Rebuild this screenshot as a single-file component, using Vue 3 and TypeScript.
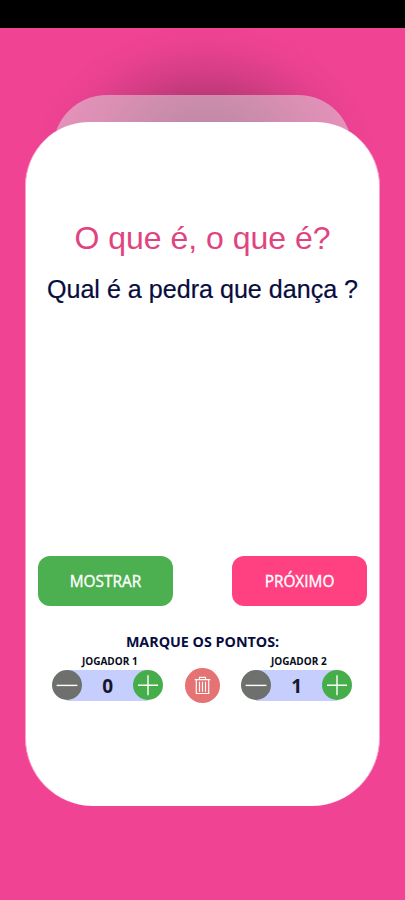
<script setup lang="ts">
import { ref } from 'vue'

interface Player {
  label: string
  points: number
}

const players = ref<Player[]>([
  { label: 'JOGADOR 1', points: 0 },
  { label: 'JOGADOR 2', points: 1 },
])

function change(player: Player, delta: number): void {
  player.points = Math.max(0, player.points + delta)
}

function reset(): void {
  players.value.forEach((p) => (p.points = 0))
}
</script>

<template>
  <div class="screen">
    <div class="status-bar"></div>
    <main class="stage">
      <div class="glow"></div>
      <div class="back-card"></div>
      <section class="card">
        <h1 class="title">O que é, o que é?</h1>
        <p class="question">Qual é a pedra que dança ?</p>
        <div class="actions">
          <button class="action show">MOSTRAR</button>
          <button class="action next">PRÓXIMO</button>
        </div>
        <h2 class="points-title">MARQUE OS PONTOS:</h2>
        <div class="scores">
          <div v-for="(player, i) in players" :key="player.label" class="player" :class="{ last: i === 1 }">
            <span class="label">{{ player.label }}</span>
            <div class="counter">
              <button class="round minus" @click="change(player, -1)">
                <svg viewBox="0 0 30 30"><path d="M4.6 15.4H25.4" /></svg>
              </button>
              <span class="value">{{ player.points }}</span>
              <button class="round plus" @click="change(player, 1)">
                <svg viewBox="0 0 30 30"><path d="M5 15.2H25M15 5.2V25.2" /></svg>
              </button>
            </div>
          </div>
          <button class="trash" @click="reset">
            <svg viewBox="0 0 36 36">
              <path d="M10 11.9H26M14.9 11.5V9.6H21.1V11.5M11.6 12.4V26.2H24.4V12.4M14.9 14.2V24.4M18 14.2V24.4M21.1 14.2V24.4" />
            </svg>
          </button>
        </div>
      </section>
    </main>
  </div>
</template>

<style>
body {
  margin: 0;
}
</style>

<style scoped>
.screen {
  display: flex;
  flex-direction: column;
  width: 405px;
  height: 900px;
  overflow: hidden;
  background: #f14394;
  font-family: 'Open Sans', 'Noto Sans', sans-serif;
}
.status-bar {
  height: 28px;
  flex: none;
  background: #000;
}
.stage {
  position: relative;
  flex: 1;
  padding: 94px 25px;
}
.glow {
  position: absolute;
  inset: 0 0 auto 0;
  height: 270px;
  background: radial-gradient(
    ellipse 176px 130px at 205px 122px,
    rgba(25, 25, 35, 0.4) 0%,
    rgba(25, 25, 35, 0.34) 25%,
    rgba(25, 25, 35, 0.24) 42%,
    rgba(25, 25, 35, 0.12) 62%,
    rgba(25, 25, 35, 0.04) 80%,
    rgba(25, 25, 35, 0) 100%
  );
}
.back-card {
  position: absolute;
  top: 67px;
  left: 53px;
  width: 299px;
  height: 120px;
  border-radius: 54px;
  background: rgba(220, 218, 220, 0.52);
}
.card {
  position: relative;
  box-sizing: border-box;
  display: flex;
  flex-direction: column;
  height: 684px;
  padding: 98px 12px 0;
  border: solid #f8a1ca;
  border-width: 0 1px;
  border-radius: 64px 64px 68px 68px;
  background: #fff;
}
.title,
.question {
  margin: 0;
  font-family: 'Liberation Sans', Arial, sans-serif;
  font-weight: 400;
  text-align: center;
  white-space: nowrap;
}
.title {
  height: 36px;
  color: #e0447f;
  font-size: 32px;
  line-height: 36px;
}
.question {
  height: 30px;
  margin: 18px -10px 0;
  color: #070d40;
  font-size: 25.1px;
  line-height: 30px;
  -webkit-text-stroke: 0.2px #070d40;
}
button {
  padding: 0;
  border: 0;
  font-family: inherit;
}
.actions {
  display: flex;
  justify-content: space-between;
  width: 329px;
  margin-top: 252px;
}
.action {
  width: 135px;
  height: 50px;
  border-radius: 12px;
  color: #fff;
  font-size: 15.4px;
  font-weight: 400;
  -webkit-text-stroke: 0.35px #fff;
}
.show {
  background: #4caf50;
}
.next {
  background: #ff4081;
}
.points-title {
  height: 20px;
  margin: 26px 0 0;
  color: #070d40;
  font-size: 14.3px;
  font-weight: 700;
  line-height: 19px;
  text-align: center;
}
.scores {
  display: grid;
  grid-template-columns: 111px 35px 111px;
  justify-content: center;
  column-gap: 21.5px;
  width: 328.6px;
  margin-top: 3px;
}
.player {
  grid-row: 1;
  grid-column: 1;
}
.player.last {
  grid-column: 3;
}
.label {
  display: block;
  height: 15px;
  padding-left: 4px;
  color: #070d20;
  font-size: 10px;
  font-weight: 700;
  line-height: 13px;
  text-align: center;
}
.counter {
  display: flex;
  justify-content: space-between;
  height: 31px;
  background: linear-gradient(#c5cefd, #c5cefd) center / 81px 31px no-repeat;
}
.round {
  width: 30px;
  height: 30px;
  border-radius: 50%;
}
.minus {
  background: #6d706d;
}
.plus {
  background: #46ad4b;
}
svg {
  display: block;
  width: 100%;
  height: 100%;
  fill: none;
  stroke: #fff;
  stroke-width: 1.4;
}
.value {
  color: #16182a;
  font-size: 19px;
  font-weight: 700;
  line-height: 32px;
}
.trash {
  grid-row: 1;
  grid-column: 2;
  width: 35px;
  height: 35px;
  margin-top: 12.5px;
  border-radius: 50%;
  background: #e57373;
}
.trash svg {
  stroke-width: 1.2;
}
</style>
